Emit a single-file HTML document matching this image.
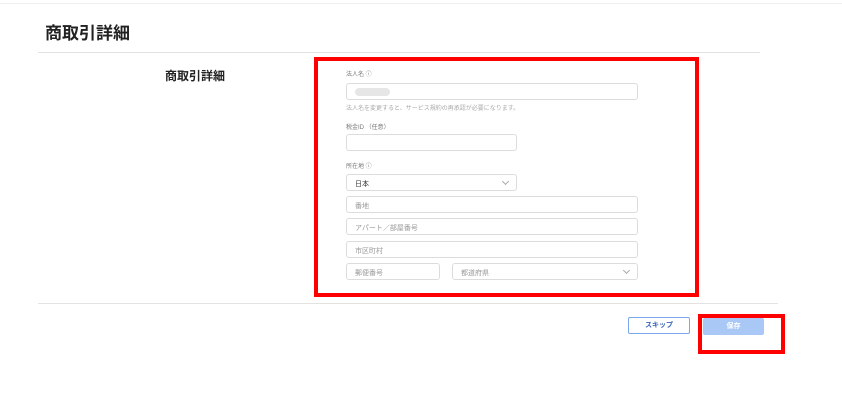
<!DOCTYPE html>
<html><head><meta charset="utf-8"><style>
body{margin:0;width:842px;height:407px;background:#fff;position:relative;overflow:hidden;font-family:"Liberation Sans","Noto Sans CJK JP",sans-serif;}
.a{position:absolute}
.in{position:absolute;border:1px solid #dcdcdc;border-radius:3px;height:17px;box-sizing:border-box;font-size:7px;color:#999;padding:4px 0 0 8px}
.lb{position:absolute;font-size:6px;color:#777}
.chev{position:absolute;right:8px;top:4px;width:4px;height:4px;border-right:1px solid #aaa;border-bottom:1px solid #aaa;transform:rotate(45deg)}
</style></head><body>
<div class="a" style="left:0;top:3px;width:842px;height:1px;background:#eee"></div>
<div class="a" style="left:45px;top:19px;font-size:17px;font-weight:bold;color:#222">商取引詳細</div>
<div class="a" style="left:38px;top:52px;width:722px;height:1px;background:#e2e2e2"></div>
<div class="a" style="left:165px;top:67px;font-size:12px;font-weight:bold;color:#222">商取引詳細</div>
<div class="lb" style="left:346px;top:69px">法人名 ⓘ</div>
<div class="in" style="left:346px;top:83px;width:292px"><span style="display:inline-block;width:35px;height:8px;background:#e6e6e6;border-radius:4px"></span></div>
<div class="lb" style="left:346px;top:103px;color:#aaa">法人名を変更すると、サービス規約の再承認が必要になります。</div>
<div class="lb" style="left:346px;top:122px">税金ID （任意）</div>
<div class="in" style="left:346px;top:134px;width:171px"></div>
<div class="lb" style="left:346px;top:161px">所在地 ⓘ</div>
<div class="in" style="left:346px;top:174px;width:171px;color:#333">日本<div class="chev"></div></div>
<div class="in" style="left:346px;top:196px;width:292px">番地</div>
<div class="in" style="left:346px;top:218px;width:292px">アパート／部屋番号</div>
<div class="in" style="left:346px;top:241px;width:292px">市区町村</div>
<div class="in" style="left:346px;top:263px;width:94px">郵便番号</div>
<div class="in" style="left:452px;top:263px;width:186px">都道府県<div class="chev"></div></div>
<div class="a" style="left:314px;top:57px;width:377px;height:232px;border:4px solid #f00"></div>
<div class="a" style="left:38px;top:303px;width:740px;height:1px;background:#e2e2e2"></div>
<div class="a" style="left:628px;top:317px;width:62px;height:17px;box-sizing:border-box;border:1px solid #7aa7ee;border-radius:2px;font-size:7px;font-weight:bold;color:#3a66b8;text-align:center;line-height:15px">スキップ</div>
<div class="a" style="left:703px;top:318px;width:61px;height:17px;background:#a9c8f5;border-radius:2px;font-size:7px;font-weight:bold;color:#fff;text-align:center;line-height:17px">保存</div>
<div class="a" style="left:698px;top:314px;width:79px;height:32px;border:4px solid #f00"></div>
</body></html>
